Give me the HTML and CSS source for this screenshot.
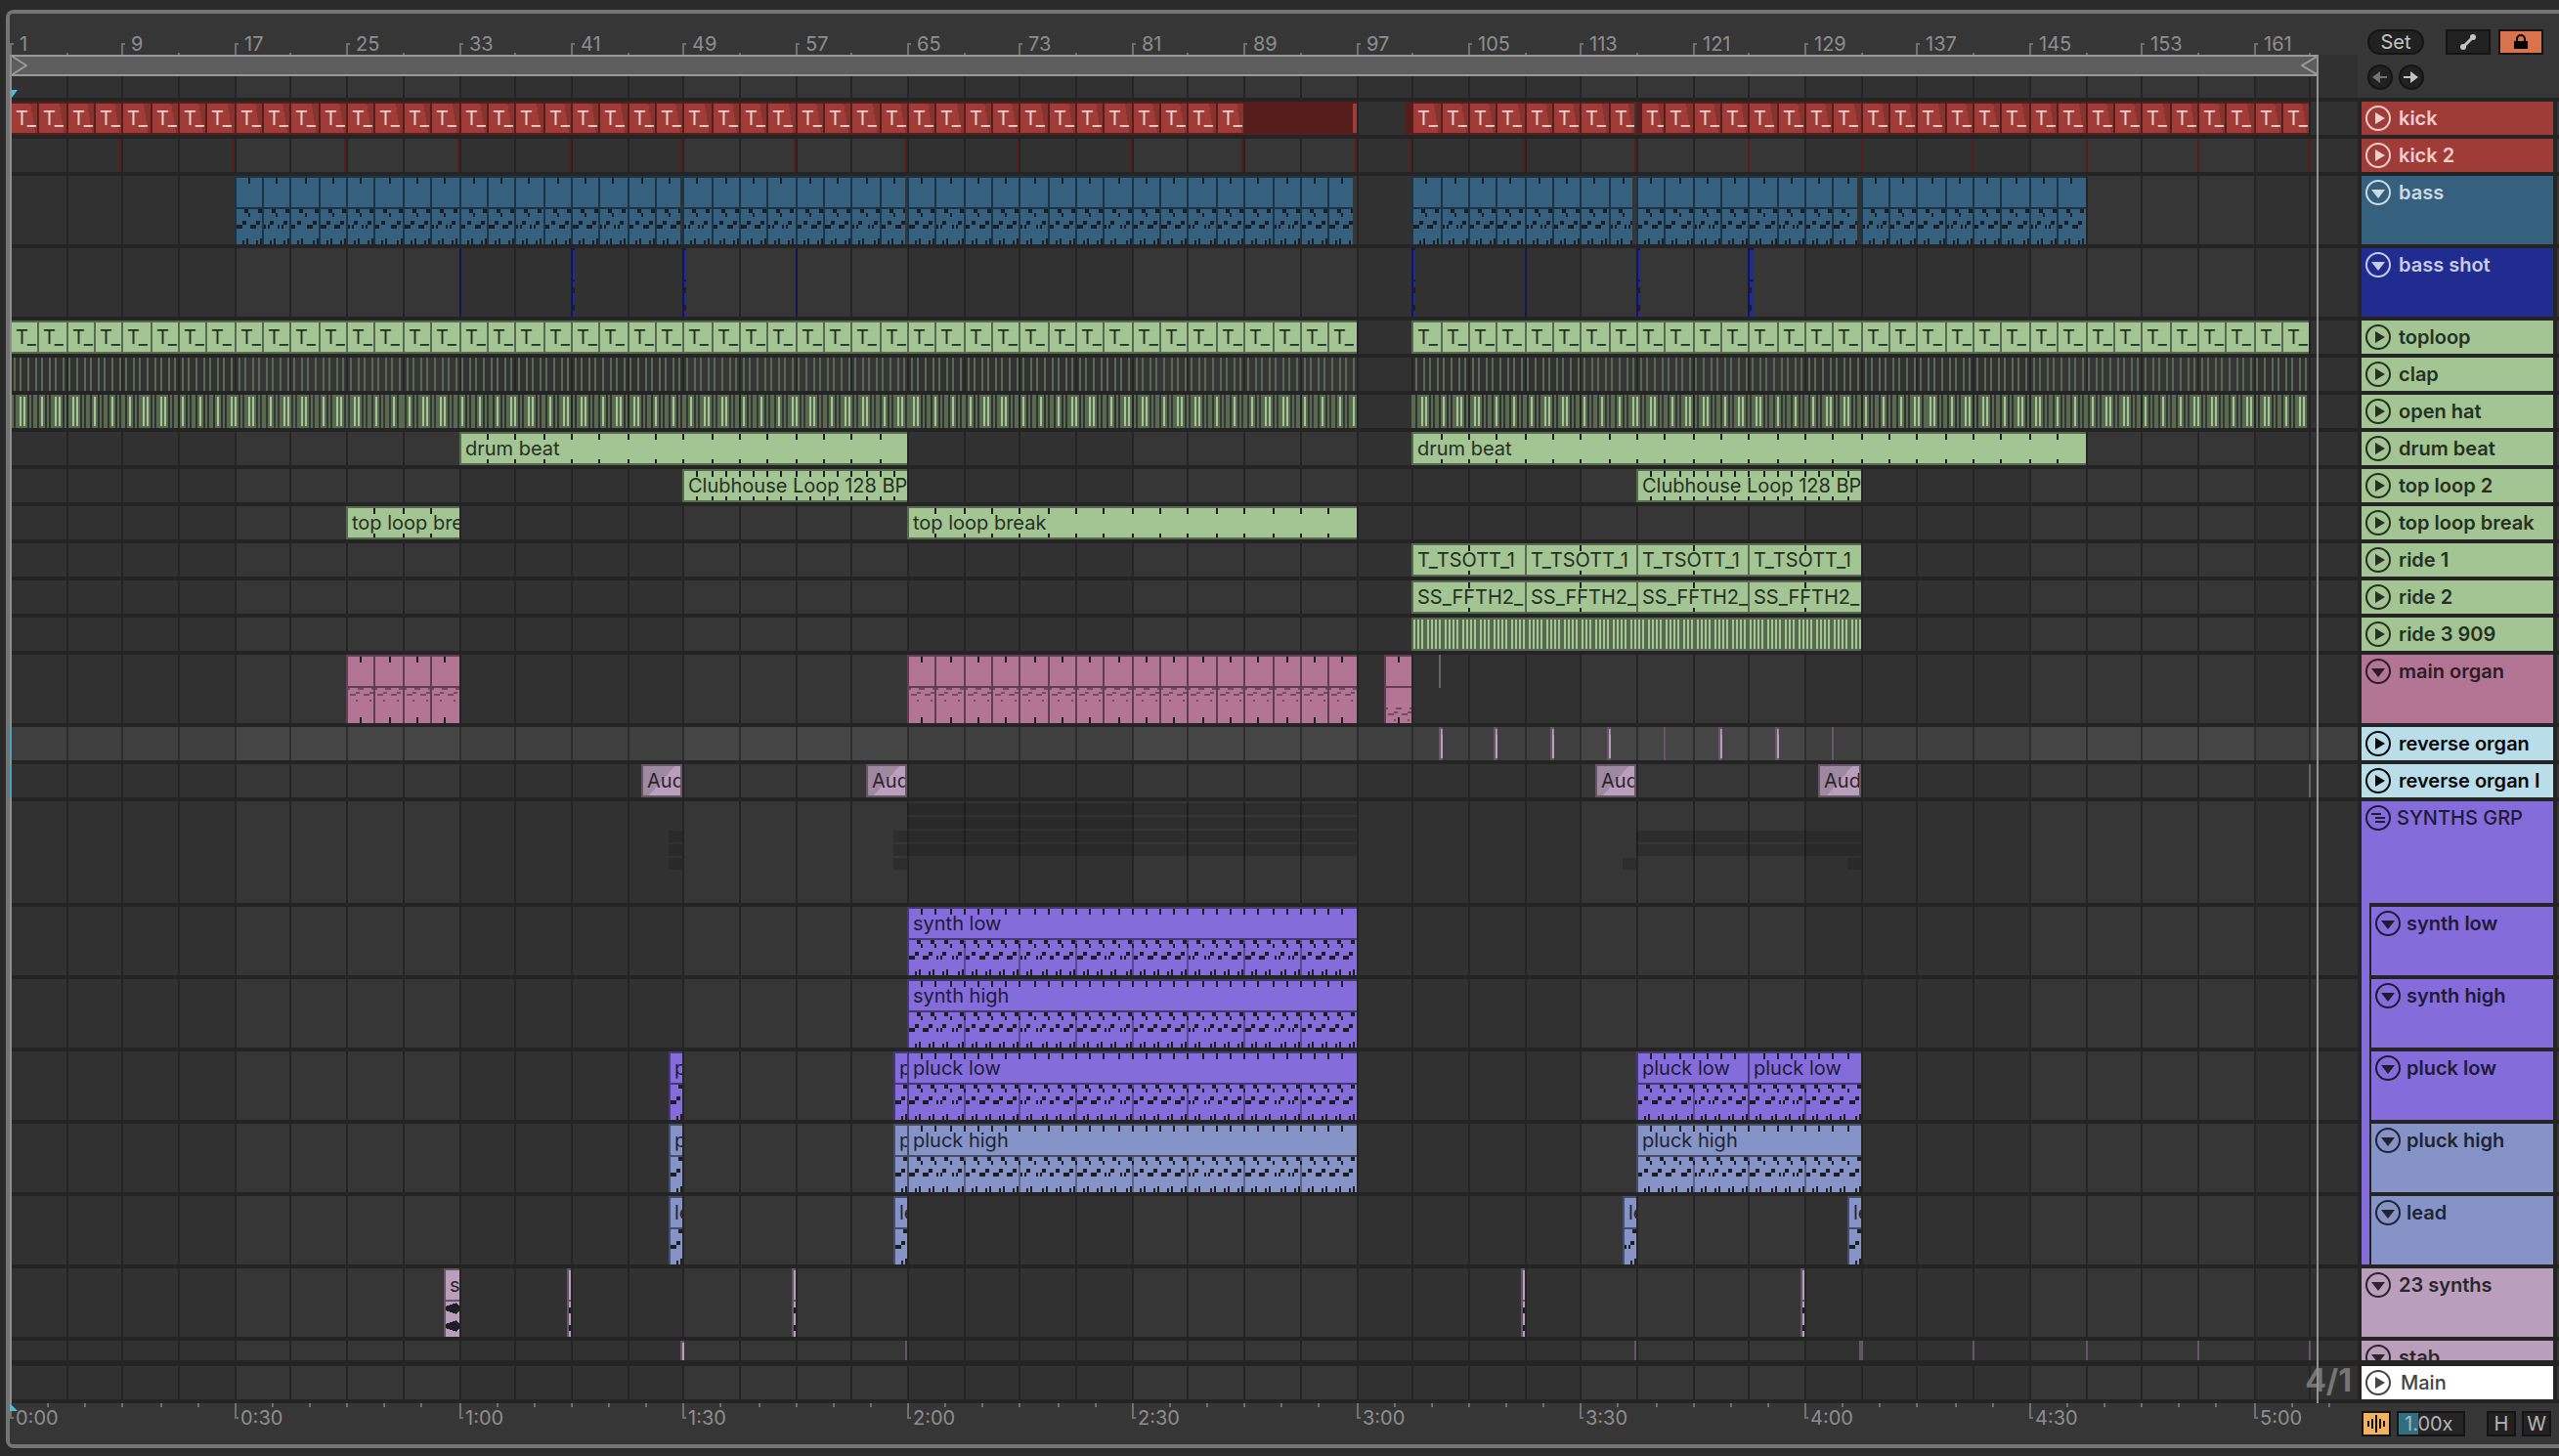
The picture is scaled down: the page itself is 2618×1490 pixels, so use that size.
FILE: index.html
```html
<!DOCTYPE html>
<html lang="en">
<head>
    <meta charset="UTF-8">
    <meta name="viewport" content="width=device-width, initial-scale=1.0">
    <title>Arrangement</title>
    <link rel="stylesheet" href="styles.css">
</head>
<body>
    <svg class="sprite" aria-hidden="true">
        <symbol id="play" viewBox="0 0 26 26">
            <circle cx="13" cy="13" r="12" fill="none" stroke="currentColor" stroke-width="2"/>
            <path d="M10 7l10 6-10 6z" fill="currentColor"/>
        </symbol>
        <symbol id="down" viewBox="0 0 26 26">
            <circle cx="13" cy="13" r="12" fill="none" stroke="currentColor" stroke-width="2"/>
            <path d="M6 10h14l-7 9z" fill="currentColor"/>
        </symbol>
        <symbol id="group" viewBox="0 0 26 26">
            <circle cx="13" cy="13" r="12" fill="none" stroke="currentColor" stroke-width="2"/>
            <path d="M6 9h10M10 13h10M10 17h10" fill="none" stroke="currentColor" stroke-width="2"/>
        </symbol>
    </svg>

    <main class="frame">
        <div class="row top">
            <div class="timeline">
                <div class="ruler" id="barRuler"></div>
                <div class="scrub">
                    <div class="loop">
                        <svg width="16" height="18" viewBox="0 0 16 18"><path d="M1 0l14 9-14 9" fill="none" stroke="#999" stroke-width="2"/></svg>
                        <svg width="16" height="18" viewBox="0 0 16 18"><path d="M16 0L1 9l15 9" fill="none" stroke="#999" stroke-width="2"/></svg>
                    </div>
                </div>
                <div class="lane locators" data-track="locators"></div>
            </div>
            <div class="tools">
                <div class="tools-row">
                    <button class="pill">Set</button>
                    <button class="box auto" aria-label="Automation mode">
                        <svg width="18" height="18" viewBox="0 0 18 18"><path d="M4 14L14 4" stroke="#c4c4c4" stroke-width="3"/><circle cx="4" cy="14" r="3" fill="#c4c4c4"/><circle cx="14" cy="4" r="3" fill="#c4c4c4"/></svg>
                    </button>
                    <button class="box lock" aria-label="Lock envelopes">
                        <svg width="14" height="16" viewBox="0 0 14 16"><path d="M3 8V5a4 4 0 0 1 8 0v3" fill="none" stroke="#000" stroke-width="2"/><path d="M0 7h14v8H0z"/></svg>
                    </button>
                </div>
                <div class="tools-row arrows">
                    <button class="round off" aria-label="Previous locator"><svg width="16" height="14" viewBox="0 0 16 14"><path d="M0 7l8-6v5h7v2H8v5z" fill="currentColor"/></svg></button>
                    <button class="round" aria-label="Next locator"><svg width="16" height="14" viewBox="0 0 16 14"><path d="M15 7L7 1v5H0v2h7v5z" fill="currentColor"/></svg></button>
                </div>
            </div>
            <div class="edge"></div>
        </div>

        <div class="tracks">
            <div class="row track red">
                <div class="lane" data-track="kick"></div>
                <div class="head"><button class="fold" aria-label="Unfold kick"><svg><use href="#play"/></svg></button><span>kick</span></div>
                <div class="edge"></div>
            </div>
            <div class="row track red">
                <div class="lane" data-track="kick2"></div>
                <div class="head"><button class="fold" aria-label="Unfold kick 2"><svg><use href="#play"/></svg></button><span>kick 2</span></div>
                <div class="edge"></div>
            </div>
            <div class="row track tall blue">
                <div class="lane" data-track="bass"></div>
                <div class="head"><button class="fold" aria-label="Fold bass"><svg><use href="#down"/></svg></button><span>bass</span></div>
                <div class="edge"></div>
            </div>
            <div class="row track tall navy">
                <div class="lane" data-track="bassShot"></div>
                <div class="head"><button class="fold" aria-label="Fold bass shot"><svg><use href="#down"/></svg></button><span>bass shot</span></div>
                <div class="edge"></div>
            </div>
            <div class="row track green">
                <div class="lane" data-track="toploop"></div>
                <div class="head"><button class="fold" aria-label="Unfold toploop"><svg><use href="#play"/></svg></button><span>toploop</span></div>
                <div class="edge"></div>
            </div>
            <div class="row track green">
                <div class="lane" data-track="clap"></div>
                <div class="head"><button class="fold" aria-label="Unfold clap"><svg><use href="#play"/></svg></button><span>clap</span></div>
                <div class="edge"></div>
            </div>
            <div class="row track green">
                <div class="lane" data-track="openHat"></div>
                <div class="head"><button class="fold" aria-label="Unfold open hat"><svg><use href="#play"/></svg></button><span>open hat</span></div>
                <div class="edge"></div>
            </div>
            <div class="row track green">
                <div class="lane" data-track="drumBeat"></div>
                <div class="head"><button class="fold" aria-label="Unfold drum beat"><svg><use href="#play"/></svg></button><span>drum beat</span></div>
                <div class="edge"></div>
            </div>
            <div class="row track green">
                <div class="lane" data-track="topLoop2"></div>
                <div class="head"><button class="fold" aria-label="Unfold top loop 2"><svg><use href="#play"/></svg></button><span>top loop 2</span></div>
                <div class="edge"></div>
            </div>
            <div class="row track green">
                <div class="lane" data-track="topLoopBreak"></div>
                <div class="head"><button class="fold" aria-label="Unfold top loop break"><svg><use href="#play"/></svg></button><span>top loop break</span></div>
                <div class="edge"></div>
            </div>
            <div class="row track green">
                <div class="lane" data-track="ride1"></div>
                <div class="head"><button class="fold" aria-label="Unfold ride 1"><svg><use href="#play"/></svg></button><span>ride 1</span></div>
                <div class="edge"></div>
            </div>
            <div class="row track green">
                <div class="lane" data-track="ride2"></div>
                <div class="head"><button class="fold" aria-label="Unfold ride 2"><svg><use href="#play"/></svg></button><span>ride 2</span></div>
                <div class="edge"></div>
            </div>
            <div class="row track green">
                <div class="lane" data-track="ride3"></div>
                <div class="head"><button class="fold" aria-label="Unfold ride 3 909"><svg><use href="#play"/></svg></button><span>ride 3 909</span></div>
                <div class="edge"></div>
            </div>
            <div class="row track tall pink">
                <div class="lane" data-track="mainOrgan"></div>
                <div class="head"><button class="fold" aria-label="Fold main organ"><svg><use href="#down"/></svg></button><span>main organ</span></div>
                <div class="edge"></div>
            </div>
            <div class="row track mauve selected current">
                <div class="lane" data-track="reverseOrgan"></div>
                <div class="head"><button class="fold" aria-label="Unfold reverse organ"><svg><use href="#play"/></svg></button><span>reverse organ</span></div>
                <div class="edge"></div>
            </div>
            <div class="row track mauve selected">
                <div class="lane" data-track="reverseOrganI"></div>
                <div class="head"><button class="fold" aria-label="Unfold reverse organ I"><svg><use href="#play"/></svg></button><span>reverse organ I</span></div>
                <div class="edge"></div>
            </div>
            <div class="row track group violet">
                <div class="lane" data-track="synthsGrp"></div>
                <div class="head"><button class="fold" aria-label="Fold group"><svg><use href="#group"/></svg></button><span>SYNTHS GRP</span></div>
                <div class="edge"></div>
            </div>
            <div class="row track tall child violet">
                <div class="lane" data-track="synthLow"></div>
                <div class="head"><button class="fold" aria-label="Fold synth low"><svg><use href="#down"/></svg></button><span>synth low</span></div>
                <div class="edge"></div>
            </div>
            <div class="row track tall child violet">
                <div class="lane" data-track="synthHigh"></div>
                <div class="head"><button class="fold" aria-label="Fold synth high"><svg><use href="#down"/></svg></button><span>synth high</span></div>
                <div class="edge"></div>
            </div>
            <div class="row track tall child violet">
                <div class="lane" data-track="pluckLow"></div>
                <div class="head"><button class="fold" aria-label="Fold pluck low"><svg><use href="#down"/></svg></button><span>pluck low</span></div>
                <div class="edge"></div>
            </div>
            <div class="row track tall child slate">
                <div class="lane" data-track="pluckHigh"></div>
                <div class="head"><button class="fold" aria-label="Fold pluck high"><svg><use href="#down"/></svg></button><span>pluck high</span></div>
                <div class="edge"></div>
            </div>
            <div class="row track tall child last slate">
                <div class="lane" data-track="lead"></div>
                <div class="head"><button class="fold" aria-label="Fold lead"><svg><use href="#down"/></svg></button><span>lead</span></div>
                <div class="edge"></div>
            </div>
            <div class="row track tall mauve">
                <div class="lane" data-track="synths23"></div>
                <div class="head"><button class="fold" aria-label="Fold 23 synths"><svg><use href="#down"/></svg></button><span>23 synths</span></div>
                <div class="edge"></div>
            </div>
            <div class="row track tall mauve">
                <div class="lane" data-track="stab"></div>
                <div class="head"><button class="fold" aria-label="Fold stab"><svg><use href="#down"/></svg></button><span>stab</span></div>
                <div class="edge"></div>
            </div>
        </div>

        <div class="row track main">
            <div class="lane" data-track="main"></div>
            <div class="head"><button class="fold" aria-label="Unfold Main"><svg><use href="#play"/></svg></button><span>Main</span></div>
            <div class="edge"></div>
            <div class="signature">4/1</div>
        </div>

        <div class="row bottom">
            <div class="ruler time" id="timeRuler"></div>
            <div class="status">
                <button class="box wave" aria-label="Waveform zoom">
                    <svg width="20" height="18" viewBox="0 0 20 18"><path d="M2 6v6M6 4v10M10 0v18M14 4v10M18 6v6" stroke="#111" stroke-width="2"/></svg>
                </button>
                <input class="zoom" type="text" value="1.00x" aria-label="Waveform zoom factor">
                <button class="box small">H</button>
                <button class="box small">W</button>
            </div>
            <div class="edge"></div>
        </div>
        <div class="end-marker" id="endMarker"></div>
        <div class="insert-line"></div>
        <svg class="cursor cursor-top" width="6" height="8" viewBox="0 0 6 8"><path d="M0 0h6L0 8z" fill="#53bcd0"/></svg>
        <svg class="cursor cursor-bottom" width="8" height="8" viewBox="0 0 8 8"><path d="M0 0l8 8H0z" fill="#53bcd0"/></svg>
    </main>
    <script src="script.js"></script>
</body>
</html>
```
FILE: styles.css
```css
* {
    box-sizing: border-box;
}
body {
    margin: 0;
    height: 100vh;
    padding: 10px 0 8px 6px;
    background: #2a2a2a;
    color: #8e8e8e;
    font-family: Inter, "Liberation Sans", sans-serif;
    font-size: 20px;
    overflow: hidden;
}
button, input {
    font: inherit;
    color: inherit;
    margin: 0;
    padding: 0;
    border: none;
    background: none;
}
svg {
    display: block;
}
.sprite {
    display: none;
}
.frame {
    position: relative;
    display: flex;
    flex-direction: column;
    height: 100%;
    border: 4px solid #747474;
    border-right: none;
    border-radius: 8px 0 0 8px;
    background: #242424;
    overflow: hidden;
}
.row {
    position: relative;
    display: grid;
    grid-template-columns: minmax(0, 1fr) 196px 2px;
    column-gap: 4px;
    flex: none;
}
.edge {
    background: #363636;
}

/* top ruler and tools */
.top {
    margin-bottom: 4px;
    background: #363636;
}
.ruler {
    position: relative;
    height: 42px;
    overflow: hidden;
    background: #363636;
}
.tick {
    position: absolute;
    bottom: 0;
    width: 2px;
    height: 2px;
    background: #707070;
}
.tick.major {
    width: 4px;
    height: 12px;
    background: none;
    border-left: 2px solid #707070;
    border-top: 2px solid #707070;
}
.ruler span {
    position: absolute;
    top: 19px;
    line-height: 24px;
}
.scrub {
    height: 22px;
    background: #313131;
}
.loop {
    display: flex;
    justify-content: space-between;
    height: 22px;
    padding-left: 2px;
    border: 2px solid #999;
    border-left: none;
    background: #5d5d5d;
}
.locators {
    height: 22px;
}
.tools {
    padding: 16px 10px 8px 6px;
}
.tools-row {
    display: flex;
    gap: 8px;
}
.arrows {
    gap: 6px;
    margin-top: 10px;
}
.pill, .round {
    height: 26px;
    border: 2px solid #141414;
    border-radius: 13px;
    background: #212121;
    color: #c4c4c4;
    line-height: 22px;
}
.pill {
    width: 58px;
    margin-right: auto;
}
.round {
    display: grid;
    place-items: center;
    width: 26px;
}
.round.off {
    color: #747474;
}
.box {
    display: grid;
    place-items: center;
    width: 46px;
    height: 26px;
    border: 2px solid #141414;
    background: #212121;
    color: #b5b5b5;
    line-height: 22px;
}
.lock {
    background: #d9734e;
}

/* tracks */
.tracks {
    flex: 1;
    min-height: 0;
    overflow: hidden;
}
.track {
    height: 34px;
    margin-bottom: 4px;
}
.tall {
    height: 70px;
}
.lane {
    position: relative;
    overflow: hidden;
    background: #313131;
}
.lane > svg {
    position: absolute;
    left: 0;
    top: 0;
    width: 100%;
    height: 100%;
}
.head {
    display: flex;
    align-items: flex-start;
    gap: 8px;
    padding: 4px;
    background: var(--color);
    color: var(--ink);
    font-weight: 600;
    line-height: 26px;
    white-space: nowrap;
    overflow: hidden;
}
.fold {
    flex: none;
    width: 26px;
    height: 26px;
}
.fold svg {
    width: 26px;
    height: 26px;
}
.group, .child {
    margin-bottom: 0;
}
.group .lane, .group .edge, .child .lane, .child .edge {
    margin-bottom: 4px;
}
.group {
    height: 108px;
}
.child {
    height: 74px;
}
.group .head, .child .head {
    border-bottom: 4px solid #242424;
}
.group .head {
    gap: 6px;
    font-weight: 500;
}
.child .head {
    gap: 6px;
    margin-left: 10px;
}
.child::after {
    content: "";
    position: absolute;
    right: 194px;
    top: -4px;
    bottom: 0;
    width: 8px;
    background: #846ddb;
}
.child.last::after {
    bottom: 4px;
}
.red {
    --color: #a03c38;
    --edge: #551e1c;
    --ink: #eccfce;
}
.blue {
    --color: #35617f;
    --edge: #1d3444;
    --ink: #cddae2;
}
.navy {
    --color: #202c90;
    --edge: #111850;
    --ink: #c9cce6;
}
.green {
    --color: #a3c493;
    --edge: #57694e;
    --ink: #263022;
}
.pink {
    --color: #b27594;
    --edge: #613f51;
    --ink: #2d1c25;
}
.mauve {
    --color: #b99fbb;
    --edge: #655666;
    --ink: #2c252d;
}
.violet {
    --color: #846ddb;
    --edge: #463a75;
    --ink: #201a37;
}
.slate {
    --color: #8693c7;
    --edge: #474e6a;
    --ink: #202432;
}
.selected .head {
    background: #b9dde9;
    color: #0a0a0a;
}
.current .lane {
    background: #3f3f3f;
}
.current .lane > svg:first-child {
    filter: brightness(1.27);
}
.selected .lane {
    z-index: 1;
}
.selected .lane::after {
    content: "";
    position: absolute;
    left: 0;
    top: 0;
    bottom: 0;
    width: 2px;
    background: #3fa5b8;
}
.main {
    --color: #fff;
    --ink: #444;
    margin-top: 6px;
}
.main .head {
    gap: 10px;
    font-weight: 500;
}
.signature {
    position: absolute;
    right: 212px;
    top: 0;
    font-size: 32px;
    font-weight: 700;
    line-height: 30px;
    color: #757575;
}

/* clips */
.clip {
    position: absolute;
    top: 0;
    bottom: 0;
    border-left: 2px solid var(--edge);
    border-top: 2px solid var(--edge);
    background: var(--color);
    color: var(--ink);
    overflow: hidden;
}
.clip.audio {
    border-bottom: 2px solid var(--edge);
}
.clip.fade-out {
    background: linear-gradient(81deg, transparent 78%, rgba(0, 0, 0, 0.16) 78%) var(--color);
}
.clip.fade-in {
    border-right: 2px solid var(--edge);
    background: linear-gradient(131deg, rgba(0, 0, 0, 0.14) 50%, transparent 50%) var(--color);
}
.clip.solid {
    background: var(--edge);
}
.clip-name {
    height: 30px;
    padding-left: 4px;
    line-height: 30px;
    white-space: nowrap;
}
.clip.midi .clip-name {
    height: 32px;
    border-bottom: 2px solid var(--edge);
}
.clip svg {
    position: absolute;
    left: 0;
    top: 0;
    width: 100%;
    height: 100%;
}
.notes {
    fill: #1c1e24;
}
.notes.soft {
    fill: #764b61;
}
.divider {
    fill: var(--edge);
    opacity: 0.7;
}
.thin {
    fill: var(--edge);
}
.bright {
    fill: var(--color);
}
.ghost {
    fill: #666;
}
.shade {
    fill: rgba(0, 0, 0, 0.16);
}

/* bottom bar */
.bottom {
    height: 42px;
    background: #363636;
}
.time .tick {
    top: 0;
    bottom: auto;
    height: 4px;
}
.time .tick.major {
    height: 16px;
    border-top: none;
    border-bottom: 2px solid #707070;
}
.time span {
    top: 3px;
}
.status {
    display: flex;
    align-items: flex-start;
    gap: 6px;
    padding: 8px 2px 0 0;
}
.wave {
    width: 30px;
    background: #f3b262;
}
.zoom {
    width: 70px;
    height: 26px;
    margin-right: auto;
    padding-left: 6px;
    border: 2px solid #141414;
    background: linear-gradient(90deg, #2f6f80 20px, #242424 20px);
    color: #b5b5b5;
}
.small {
    width: 30px;
}

/* markers over the timeline */
.end-marker {
    position: absolute;
    z-index: 2;
    top: 42px;
    bottom: 42px;
    width: 2px;
    background: #929292;
}
.insert-line {
    position: absolute;
    left: 0;
    top: 42px;
    bottom: 42px;
    width: 2px;
    background: #8f8f8f;
}
.cursor {
    position: absolute;
}
.cursor-top {
    left: 2px;
    top: 78px;
}
.cursor-bottom {
    left: 0;
    bottom: 34px;
}
```
FILE: script.js
```js
const BARS_SHOWN = 167.445;
const END_BAR = 165.5;
let barWidth = 14;

// snap to the 2px grid of the display
const snap = px => 2 * Math.round(px / 2);
const X = bar => snap((bar - 1) * barWidth);
const rect = (x, y, w, h) => `M${x} ${y}h${w}v${h}h${-w}z`;

function repeat(from, to, step, extra) {
    const clips = [];
    for (let b = from; b < to; b += step) {
        clips.push({ from: b, to: Math.min(b + step, to), ...extra });
    }
    return clips;
}

const kick = { name: 'T_', type: 'audio', fade: 'fade-out' };
const loop = { name: 'T_', type: 'audio' };
const midi = { name: '', type: 'midi', notes: 'bass', ticks: 1 };
const organ = { name: '', type: 'midi', notes: 'organ', ticks: 1 };
const synth = name => ({ name, type: 'midi', notes: 'bass', ticks: 1, dividers: true });
const hit = { type: 'midi', name: '', notes: 'hit' };

const tracks = {
    kick: [
        ...repeat(1, 89, 2, kick),
        { from: 89, to: 96.8, type: 'audio', fade: 'solid' },
        { from: 96.7, to: 97, type: 'audio' },
        { from: 100.6, to: 101, type: 'audio', fade: 'solid' },
        ...repeat(101, 116.85, 2, kick),
        { from: 117, to: 117.3, type: 'audio', fade: 'solid' },
        { from: 117.3, to: 119, ...kick },
        ...repeat(119, 165, 2, kick)
    ],
    bass: [
        ...repeat(17, 48.8, 2, midi),
        ...repeat(49, 64.8, 2, midi),
        ...repeat(65, 96.8, 2, midi),
        ...repeat(101, 116.7, 2, midi),
        ...repeat(117, 132.8, 2, midi),
        ...repeat(133, 149, 2, midi)
    ],
    bassShot: [
        { from: 33, to: 33.14, ...hit },
        { from: 41, to: 41.3, ...hit },
        { from: 49, to: 49.3, ...hit },
        { from: 57, to: 57.14, ...hit },
        { from: 101, to: 101.3, ...hit },
        { from: 109, to: 109.14, ...hit },
        { from: 117, to: 117.3, ...hit },
        { from: 125, to: 125.3, ...hit }
    ],
    toploop: [...repeat(1, 97, 2, loop), ...repeat(101, 165, 2, loop)],
    drumBeat: [
        { from: 33, to: 65, name: 'drum beat', type: 'audio', ticks: 2 },
        { from: 101, to: 149, name: 'drum beat', type: 'audio', ticks: 2 }
    ],
    topLoop2: [
        { from: 49, to: 65, name: 'Clubhouse Loop 128 BPM', type: 'audio', ticks: 1 },
        { from: 117, to: 133, name: 'Clubhouse Loop 128 BPM', type: 'audio', ticks: 1 }
    ],
    topLoopBreak: [
        { from: 25, to: 33, name: 'top loop break', type: 'audio', ticks: 2 },
        { from: 65, to: 97, name: 'top loop break', type: 'audio', ticks: 2 }
    ],
    ride1: repeat(101, 133, 8, { name: 'T_TSOTT_1', type: 'audio', ticks: 4 }),
    ride2: repeat(101, 133, 8, { name: 'SS_FFTH2_', type: 'audio', ticks: 4 }),
    mainOrgan: [
        ...repeat(25, 33, 2, organ),
        ...repeat(65, 97, 2, organ),
        { from: 99, to: 101, ...organ, low: 20 }
    ],
    reverseOrgan: [103, 107, 111, 115, 123, 127].map(b => (
        { from: b - 0.15, to: b + 0.15, type: 'audio', fade: 'fade-out' }
    )),
    reverseOrganI: [46, 62, 114.1, 130].map(b => (
        { from: b, to: Math.floor(b) + 3, name: 'Audio', type: 'audio', fade: 'fade-in' }
    )),
    synthLow: [{ from: 65, to: 97, ...synth('synth low') }],
    synthHigh: [{ from: 65, to: 97, ...synth('synth high') }],
    pluckLow: [
        { from: 48, to: 49, ...synth('pluck low') },
        { from: 64, to: 65, ...synth('pluck low') },
        { from: 65, to: 97, ...synth('pluck low') },
        { from: 117, to: 125, ...synth('pluck low') },
        { from: 125, to: 133, ...synth('pluck low') }
    ],
    pluckHigh: [
        { from: 48, to: 49, ...synth('pluck high') },
        { from: 64, to: 65, ...synth('pluck high') },
        { from: 65, to: 97, ...synth('pluck high') },
        { from: 117, to: 133, ...synth('pluck high') }
    ],
    lead: [48, 64, 116, 132].map(b => ({ from: b, to: b + 1, ...synth('lead') })),
    synths23: [
        { from: 32, to: 33, name: 'synths', type: 'midi', notes: 'wave' },
        ...[40.75, 56.75, 108.75, 128.75].map(b => ({ from: b, to: b + 0.25, ...hit }))
    ],
    stab: [{ from: 48.85, to: 49.1, type: 'audio' }]
};

// length of the low note in each bar
const LOW_NOTES = ['full', 'full', 'split', 'split', 'half', 'full'];

function bassNotes(clip) {
    const origin = X(clip.from) + 2;
    let d = '';
    for (let b = clip.from; b < clip.to; b++) {
        const x = X(b) - origin + 2;
        const low = LOW_NOTES[(Math.floor(b) + 1) % 6];
        d += rect(x - 2, 36, 2, 4) + rect(x + 8, 32, 4, 4);
        d += rect(x + 6, 44, 4, 4);
        if (low === 'full') d += rect(x, 48, 6, 4);
        if (low === 'half') d += rect(x, 48, 4, 4);
        if (low === 'split') d += rect(x, 48, 2, 4) + rect(x + 4, 48, 2, 4);
        d += rect(x + 6, 64, 2, 4);
        d += rect(x + 10, 62, 2, 6);
    }
    return `<path class="notes" d="${d}"/>`;
}

function organNotes(clip) {
    const y = clip.low || 0;
    const d = rect(0, 32 + y, 2, 2) + rect(10, 32 + y, 6, 2) + rect(24, 32 + y, 4, 2) +
        rect(8, 36 + y, 4, 2) + rect(22, 36 + y, 4, 2) +
        rect(2, 38 + y, 6, 2) + rect(16, 38 + y, 6, 2) +
        rect(8, 44 + y, 2, 2) + rect(22, 44 + y, 2, 2);
    return `<path class="notes soft" d="${d}"/><path class="notes" d="${rect(X(clip.from + 1) - X(clip.from) - 2, 62, 2, 6)}"/>`;
}

function clipArt(clip, height) {
    let art = '';
    let ticks = '';
    const origin = X(clip.from) + 2;
    if (clip.ticks) {
        for (let b = clip.from + clip.ticks; b < clip.to; b += clip.ticks) {
            const x = X(b) - origin;
            ticks += rect(x, 0, 2, 6);
            if (clip.type === 'audio') ticks += rect(x, height - 10, 2, 6);
        }
        art += `<path class="notes" d="${ticks}"/>`;
    }
    if (clip.dividers) {
        let d = '';
        for (let b = clip.from + 4; b < clip.to; b += 4) d += rect(X(b) - origin, 32, 2, 38);
        art += `<path class="divider" d="${d}"/>`;
    }
    if (clip.notes === 'bass') art += bassNotes(clip);
    if (clip.notes === 'organ') art += organNotes(clip);
    if (clip.notes === 'hit') art += `<path class="notes" d="${rect(0, 38, 2, 6) + rect(0, 56, 2, 6)}"/>`;
    if (clip.notes === 'wave') {
        art += '<path class="notes" d="M0 37l11-4 3 4v4l-3 4-11-4zM0 55l11-4 3 4v4l-3 4-11-4z"/>';
    }
    return art;
}

function grid() {
    let light = '';
    let lines = '';
    for (let b = 17; b < BARS_SHOWN; b += 32) light += rect(X(b), 0, X(b + 16) - X(b), 110);
    for (let b = 5; b < BARS_SHOWN; b += 4) lines += rect(X(b), 0, 2, 110);
    return `<svg shape-rendering="crispEdges"><path fill="#363636" d="${light}"/><path fill="#242424" d="${lines}"/></svg>`;
}

// hits that are too short to show as separate clips
const SECTIONS = [[1, 97], [101, 165]];
const HAT_PAIR = 'DDLDLD.D.';
const HAT_SINGLE = 'DD.DLD.D.';
const HAT_ORDER = 'pspp sssp psss ppsp'.replace(/ /g, '');

const dense = {
    kick2() {
        const bars = [101];
        for (let b = 9; b <= 97; b += 8) bars.push(b);
        for (let b = 109; b <= 165; b += 8) bars.push(b);
        return `<path class="thin" d="${bars.map(b => rect(X(b) - (b < 125 ? 2 : 0), 0, 2, 34)).join('')}"/>`;
    },
    clap() {
        let d = '';
        SECTIONS.forEach(([from, to]) => {
            for (let b = from + 0.25; b < to; b += 0.5) d += rect(X(b), 0, 2, 34);
        });
        return `<path class="thin" d="${d}"/>`;
    },
    openHat() {
        let dark = '';
        let light = '';
        SECTIONS.forEach(([from, to]) => {
            dark += rect(X(from), 0, 4, 34);
            let n = 0;
            for (let b = from + 0.45; b < to - 0.2; b += 1.25, n++) {
                const cell = HAT_ORDER[n % 16] === 'p' ? HAT_PAIR : HAT_SINGLE;
                for (let i = 0; i < cell.length; i++) {
                    const x = X(b) + i * 2;
                    if (cell[i] === '.' || x >= X(to)) continue;
                    dark += rect(x, 0, 2, 34);
                    if (cell[i] === 'L') light += rect(x, 2, 2, 30);
                }
            }
        });
        return `<path class="thin" d="${dark}"/><path class="bright" d="${light}"/>`;
    },
    ride3() {
        let light = '';
        for (let b = 101; b < 133; b += 0.25) {
            const w = X(b + 0.25) - X(b) - 2;
            if (w > 0) light += rect(X(b) + 2, 2, w, 30);
        }
        return `<path class="thin" d="${rect(X(101), 0, X(133) - X(101), 34)}"/><path class="bright" d="${light}"/>`;
    },
    mainOrgan() {
        return `<path class="ghost" d="${rect(X(103) - 2, 0, 2, 34)}"/>`;
    },
    reverseOrgan() {
        return `<path class="thin" d="${rect(X(119), 0, 2, 34) + rect(X(131), 0, 2, 34)}"/>`;
    },
    reverseOrganI() {
        return `<path class="ghost" d="${rect(X(165), 0, 2, 34)}"/>`;
    },
    synthsGrp() {
        const blocks = [
            [0, 65, 97], [1, 65, 97], [2, 65, 97], [3, 65, 97],
            [2, 48, 49], [3, 48, 49], [4, 48, 49],
            [2, 64, 65], [3, 64, 65], [4, 64, 65],
            [2, 117, 133], [3, 117, 133], [4, 116, 117], [4, 132, 133]
        ];
        const d = blocks.map(([row, a, b]) => rect(X(a), 2 + row * 14, X(b) - X(a), 12)).join('');
        return `<path class="shade" d="${d}"/>`;
    },
    stab() {
        const d = [65, 117, 133, 141, 149, 157, 165].map(b => rect(X(b) - (b < 134 ? 2 : 0), 0, b === 133 ? 4 : 2, 70));
        return `<path class="thin" d="${d.join('')}"/>`;
    }
};

function renderLane(lane) {
    const id = lane.dataset.track;
    const height = lane.clientHeight;
    let html = grid();
    if (dense[id]) html += `<svg shape-rendering="crispEdges">${dense[id]()}</svg>`;
    (tracks[id] || []).forEach(clip => {
        const left = X(clip.from);
        const width = Math.max(2, X(clip.to) - left);
        html += `<div class="clip ${clip.type} ${clip.fade || ''}" style="left:${left}px;width:${width}px">` +
            `<svg shape-rendering="crispEdges">${clipArt(clip, height + 2)}</svg>` +
            (width > 8 || clip.type === 'midi' ? `<div class="clip-name">${clip.name || ''}</div>` : '') +
            '</div>';
    });
    lane.innerHTML = html;
}

function renderRulers() {
    let bars = '';
    for (let b = 1; b <= 165; b += 4) {
        const major = b % 8 === 1 && b < 165;
        bars += `<div class="tick ${major ? 'major' : ''}" style="left:${X(b)}px"></div>`;
        if (major) bars += `<span style="left:${X(b) + 10}px">${b}</span>`;
    }
    document.getElementById('barRuler').innerHTML = bars;

    // 128 BPM: 16 bars last 30 seconds
    let time = '';
    for (let s = 0; s <= 310; s += 5) {
        const x = X(1 + s * 16 / 30);
        const major = s % 30 === 0;
        time += `<div class="tick ${major ? 'major' : ''}" style="left:${x}px"></div>`;
        if (major) time += `<span style="left:${x + 6}px">${Math.floor(s / 60)}:${String(s % 60).padStart(2, '0')}</span>`;
    }
    document.getElementById('timeRuler').innerHTML = time;
}

function render() {
    barWidth = document.getElementById('barRuler').clientWidth / BARS_SHOWN;
    renderRulers();
    document.querySelectorAll('.lane').forEach(renderLane);
    document.getElementById('endMarker').style.left = X(END_BAR) + 'px';
    document.querySelector('.loop').style.width = X(END_BAR) + 2 + 'px';
}

render();
window.addEventListener('resize', render);
```
